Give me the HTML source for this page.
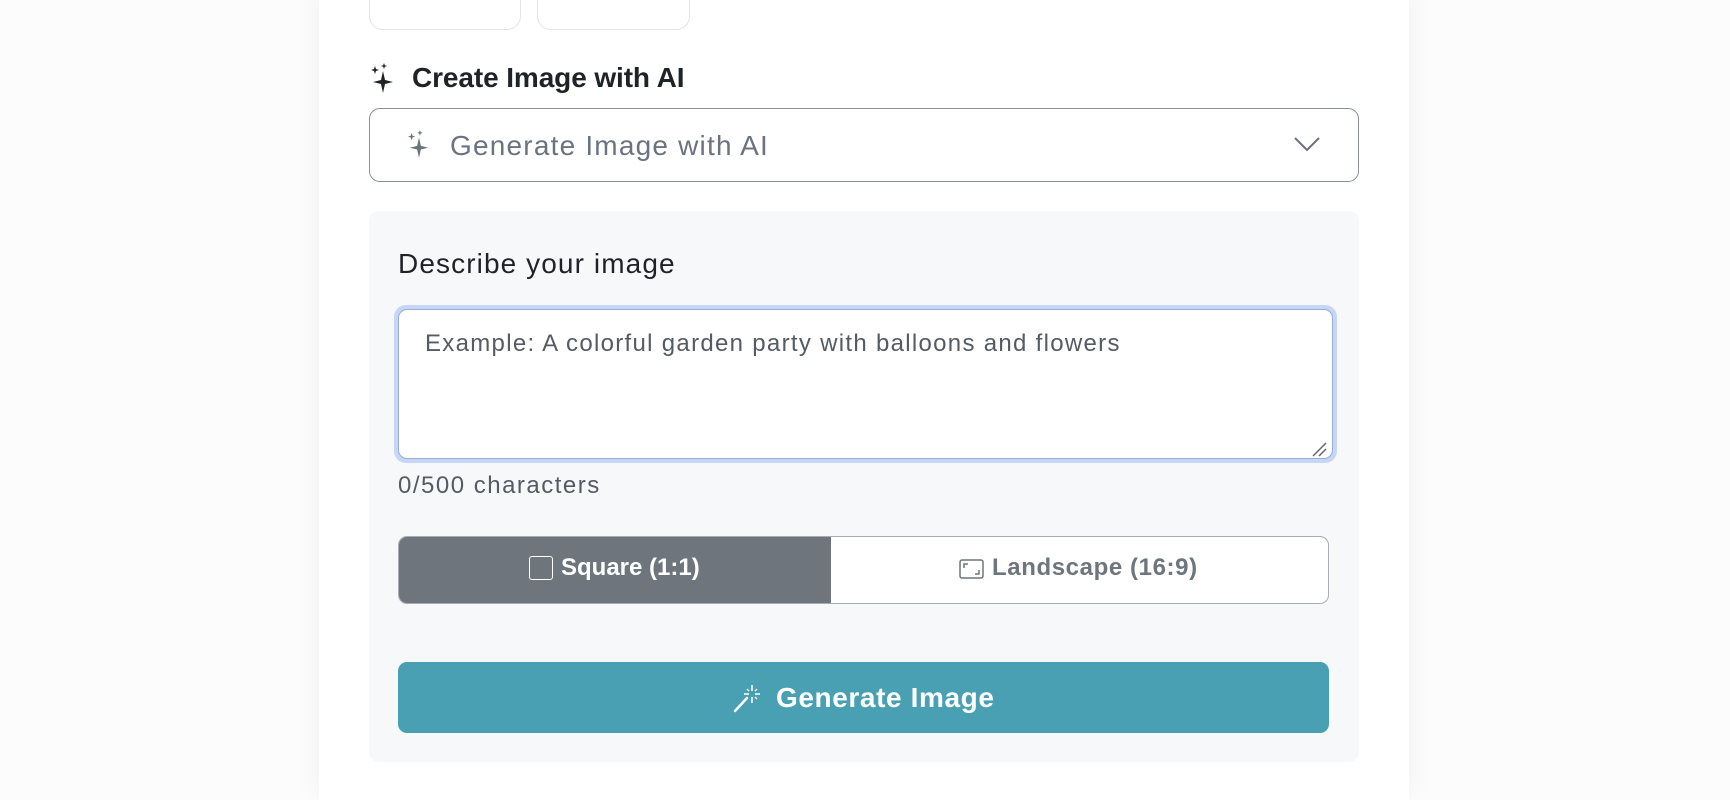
<!DOCTYPE html>
<html><head><style>
*{box-sizing:border-box;margin:0;padding:0}
body{width:1730px;height:767px;background:#fcfcfc;font-family:"Liberation Sans",sans-serif;position:relative;overflow:hidden}
.card{position:absolute;left:319px;top:-20px;width:1090px;height:820px;background:#fff;box-shadow:0 0 24px rgba(0,0,0,0.05)}
.a{position:absolute;white-space:nowrap}
.tb{border:1px solid #e3e4e6;border-radius:14px;background:#fff}
</style></head><body>
<div class="card"></div>
<div class="a tb" style="left:369px;top:-20px;width:152px;height:50px"></div>
<div class="a tb" style="left:537px;top:-20px;width:153px;height:50px"></div>

<svg class="a" style="left:370px;top:63px" width="26" height="30" viewBox="0 0 26 30"><path d="M13 8 L15 17 L23 19 L15 21 L13 30 L11 21 L3 19 L11 17Z" fill="#1f2328"/><path d="M5 3 L6 6 L9 7 L6 8 L5 11 L4 8 L1 7 L4 6Z" fill="#1f2328"/><path d="M14 0 L14.8 2.2 L17 3 L14.8 3.8 L14 6 L13.2 3.8 L11 3 L13.2 2.2Z" fill="#1f2328"/></svg>
<div class="a" style="left:412px;top:62px;font-size:28px;font-weight:bold;color:#1f2328;letter-spacing:-0.1px">Create Image with AI</div>

<div class="a" style="left:369px;top:108px;width:990px;height:74px;border:1px solid #8a8f96;border-radius:11px;background:#fff"></div>
<svg class="a" style="left:407px;top:130px" width="24" height="28" viewBox="0 0 26 30"><path d="M13 8 L15 17 L23 19 L15 21 L13 30 L11 21 L3 19 L11 17Z" fill="#6b7280"/><path d="M5 3 L6 6 L9 7 L6 8 L5 11 L4 8 L1 7 L4 6Z" fill="#6b7280"/><path d="M14 0 L14.8 2.2 L17 3 L14.8 3.8 L14 6 L13.2 3.8 L11 3 L13.2 2.2Z" fill="#6b7280"/></svg>
<div class="a" style="left:450px;top:130px;font-size:28px;color:#6b7280;letter-spacing:1.2px">Generate Image with AI</div>
<svg class="a" style="left:1294px;top:136px" width="26" height="16" viewBox="0 0 26 16"><path d="M1 2 L13 14 L25 2" fill="none" stroke="#6b7280" stroke-width="2"/></svg>

<div class="a" style="left:369px;top:211px;width:990px;height:551px;background:#f7f8fa;border-radius:10px"></div>
<div class="a" style="left:398px;top:248px;font-size:28px;color:#1f2328;letter-spacing:1.1px">Describe your image</div>
<div class="a" style="left:394px;top:305px;width:943px;height:158px;border:5px solid #c5d6f8;border-radius:12px;background:#c5d6f8"></div>
<div class="a" style="left:398px;top:309px;width:935px;height:150px;border:1px solid #9aaecf;border-radius:9px;background:#fff"></div>
<svg class="a" style="left:1311px;top:441px" width="16" height="16" viewBox="0 0 16 16"><path d="M2 15 L15 2 M8 15 L15 8" stroke="#666" stroke-width="1.5"/></svg>
<div class="a" style="left:425px;top:330px;font-size:24px;color:#555b63;letter-spacing:1.3px">Example: A colorful garden party with balloons and flowers</div>
<div class="a" style="left:398px;top:472px;font-size:24px;color:#555b63;letter-spacing:1.5px">0/500 characters</div>

<div class="a" style="left:398px;top:536px;width:931px;height:68px;border:1px solid #a9adb3;border-radius:9px;background:#fff;overflow:hidden">
<div style="position:absolute;left:0;top:0;width:432px;height:68px;background:#6e757d"></div>
</div>
<div class="a" style="left:529px;top:556px;width:24px;height:24px;border:1.5px solid #fff;border-radius:3px"></div>
<div class="a" style="left:561px;top:554px;font-size:24px;font-weight:bold;color:#fff">Square (1:1)</div>
<svg class="a" style="left:959px;top:559px" width="25" height="20" viewBox="0 0 25 20"><rect x="1" y="1" width="23" height="18" rx="2" fill="none" stroke="#6e757d" stroke-width="1.5"/><path d="M5 9 V5 H9 M16 15 H20 V11" fill="none" stroke="#6e757d" stroke-width="1.5"/></svg>
<div class="a" style="left:992px;top:554px;font-size:24px;font-weight:bold;color:#6e757d;letter-spacing:0.6px">Landscape (16:9)</div>

<div class="a" style="left:398px;top:662px;width:931px;height:71px;background:#4aa0b3;border-radius:9px"></div>
<svg class="a" style="left:733px;top:683px" width="28" height="30" viewBox="0 0 28 30"><path d="M2 28 L14 15" stroke="#fff" stroke-width="2.5" stroke-linecap="round"/><path d="M19 2 V8 M19 14 V20 M11 11 H16 M22 11 H27 M14 6 L16 8 M24 6 L22 8 M22 14 L24 16" stroke="#fff" stroke-width="1.5"/></svg>
<div class="a" style="left:776px;top:682px;font-size:28px;font-weight:bold;color:#fff;letter-spacing:0.6px">Generate Image</div>
</body></html>
